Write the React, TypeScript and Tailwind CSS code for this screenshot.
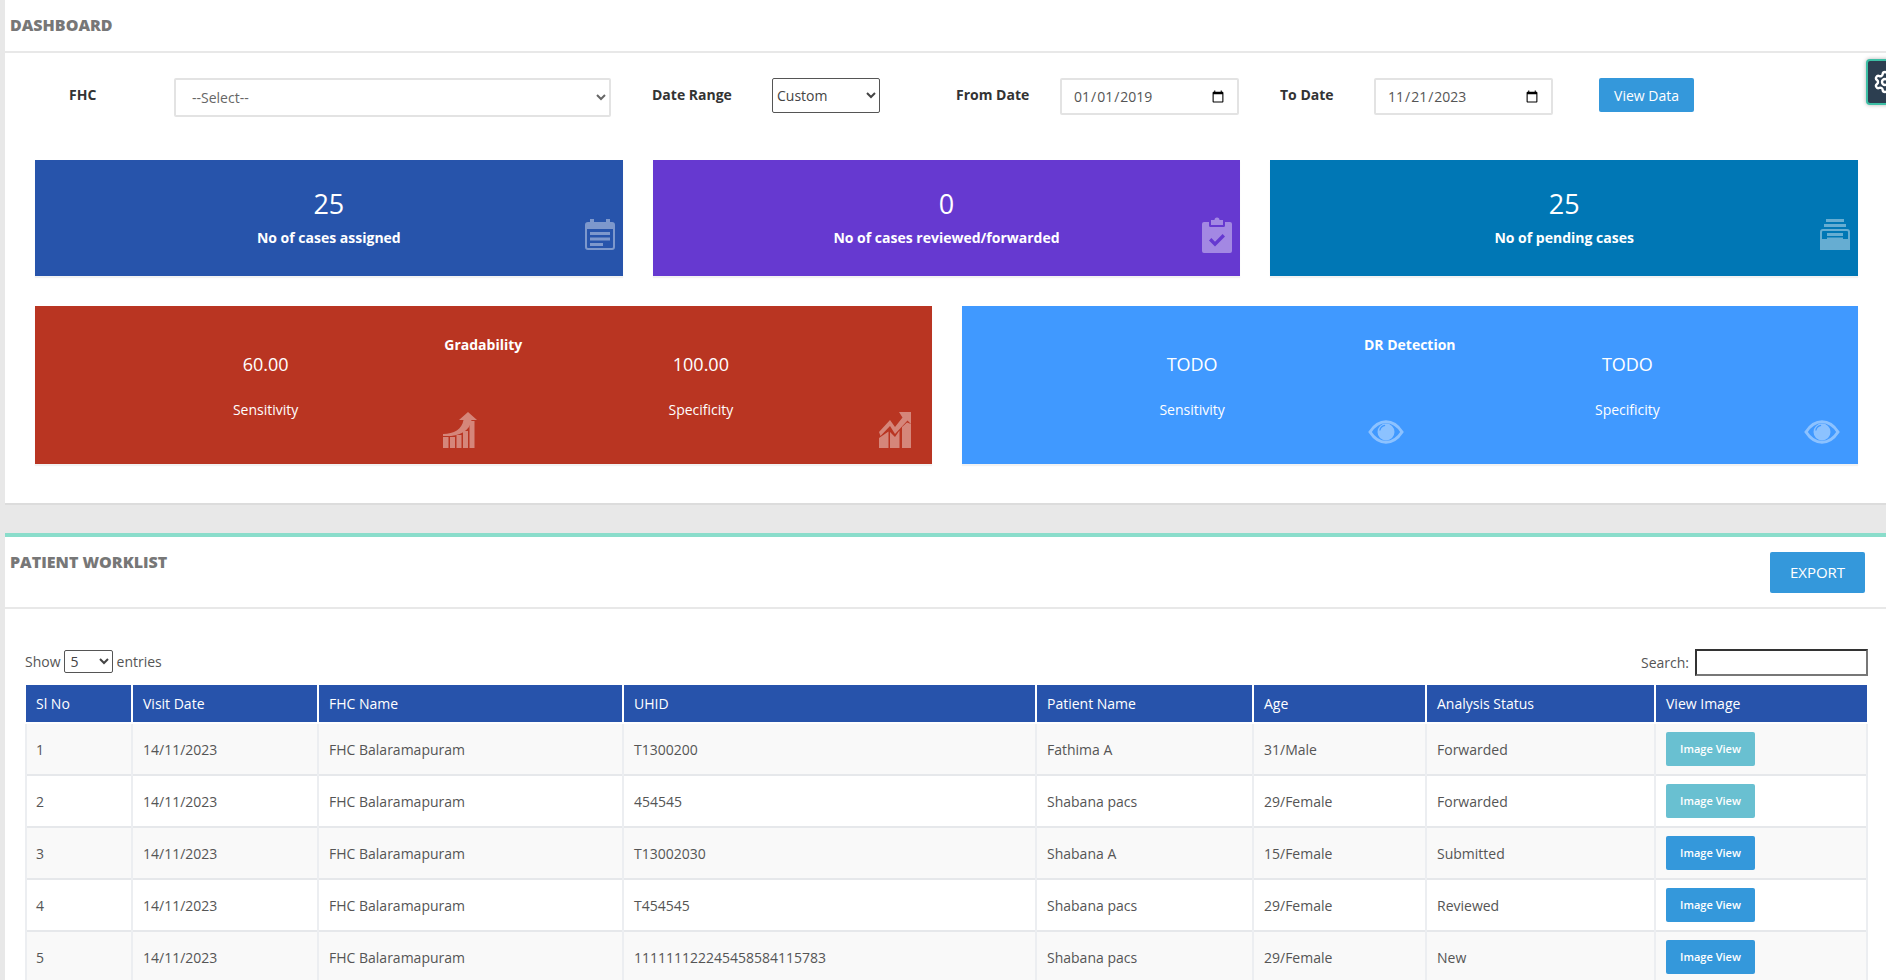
import { Settings } from "lucide-react";

const rows = [
  { no: 1, uhid: "T1300200", name: "Fathima A", age: "31/Male", status: "Forwarded", muted: true },
  { no: 2, uhid: "454545", name: "Shabana pacs", age: "29/Female", status: "Forwarded", muted: true },
  { no: 3, uhid: "T13002030", name: "Shabana A", age: "15/Female", status: "Submitted", muted: false },
  { no: 4, uhid: "T454545", name: "Shabana pacs", age: "29/Female", status: "Reviewed", muted: false },
  { no: 5, uhid: "111111122245458584115783", name: "Shabana pacs", age: "29/Female", status: "New", muted: false },
];

const columns = [
  { label: "Sl No", width: 106 },
  { label: "Visit Date", width: 186 },
  { label: "FHC Name", width: 305 },
  { label: "UHID", width: 413 },
  { label: "Patient Name", width: 217 },
  { label: "Age", width: 173 },
  { label: "Analysis Status", width: 229 },
  { label: "View Image", width: 212 },
];

function CalendarIcon() {
  return (
    <svg viewBox="0 0 30 31" className="absolute right-[8px] bottom-[26px] w-[30px] h-[31px]" fill="none">
      <g opacity="0.4">
        <path fillRule="evenodd" clipRule="evenodd" fill="#fff" d="M5 0.5a2 2 0 0 1 4 0V3h12V0.5a2 2 0 0 1 4 0V3h2a3 3 0 0 1 3 3v22a3 3 0 0 1-3 3H3a3 3 0 0 1-3-3V6a3 3 0 0 1 3-3h2zM2 10v18a1 1 0 0 0 1 1h24a1 1 0 0 0 1-1V10z" />
        <rect x="5" y="13" width="20" height="3" fill="#fff" />
        <rect x="5" y="18.500" width="20" height="3" fill="#fff" />
        <rect x="5" y="24" width="13" height="3" fill="#fff" />
      </g>
    </svg>
  );
}

function ClipboardIcon() {
  return (
    <svg viewBox="0 0 30 36" className="absolute right-[8px] bottom-[23px] w-[30px] h-[36px]" fill="none">
      <path opacity="0.4" fill="#fff" fillRule="evenodd" clipRule="evenodd" d="M2 5h5V8.500a1.500 1.500 0 0 0 1.500 1.500h13A1.500 1.500 0 0 0 23 8.500V5h5a2 2 0 0 1 2 2v27a2 2 0 0 1-2 2H2a2 2 0 0 1-2-2V7a2 2 0 0 1 2-2zM9 3h3.500a2.500 2.500 0 0 1 5 0H21v5H9zM7 23.500l2.400-2.400 3.600 3.600 7.600-7.600 2.400 2.400-10 10z" />
    </svg>
  );
}

function TrayIcon() {
  return (
    <svg viewBox="0 0 30 31" className="absolute right-[8px] bottom-[26px] w-[30px] h-[31px]" fill="none">
      <g opacity="0.4" fill="#fff">
        <rect x="6" y="0" width="18" height="3" />
        <rect x="4" y="5" width="22" height="3" />
        <path fillRule="evenodd" clipRule="evenodd" d="M3 10h24a3 3 0 0 1 3 3v18H0V13a3 3 0 0 1 3-3zM2 20h26v-7a1 1 0 0 0-1-1H3a1 1 0 0 0-1 1z" />
        <rect x="7" y="14" width="16" height="3" />
        <rect x="7" y="18.500" width="16" height="1.500" />
      </g>
    </svg>
  );
}

function GrowthIcon() {
  return (
    <svg viewBox="0 0 34 36" className="absolute w-[34px] h-[36px] left-[408px] bottom-[16px]" fill="none">
      <g opacity="0.4" fill="#fff">
        <rect x="0" y="25" width="5.500" height="11" />
        <rect x="7" y="25" width="5" height="11" />
        <rect x="13.500" y="23" width="5" height="13" />
        <rect x="20" y="19" width="5" height="17" />
        <rect x="26.500" y="9" width="5" height="27" />
        <path d="M0 22C11 22 19 17 20.500 8H16L25 0l9 8h-5.500C27 20 14 25 0 24z" />
      </g>
    </svg>
  );
}

function TrendIcon() {
  return (
    <svg viewBox="0 0 32 36" className="absolute w-[32px] h-[36px] right-[21px] bottom-[16px]" fill="none">
      <g opacity="0.4" fill="#fff">
        <path d="M0 26l9.500-6.500V36H0z" />
        <path d="M11 20l5 5 4.500-6.500V36H11z" />
        <path d="M23 15l5-4.500 4 1.500V36h-9z" />
        <path d="M0 20L11 8l5 7 7.500-9.500L20 0h12v12l-3.500-3.500L16 22 11 14 1.500 24z" />
      </g>
    </svg>
  );
}

function EyeIcon({ className }: { className: string }) {
  return (
    <svg viewBox="0 0 36 24" className={`absolute w-[36px] h-[24px] bottom-[20px] ${className}`} fill="none">
      <g opacity="0.4">
        <path stroke="#fff" strokeWidth="3" d="M2 12C6.500 5 12 1.800 18 1.800S29.500 5 34 12c-4.500 7-10 10.200-16 10.200S6.500 19 2 12z" />
        <path fill="#fff" fillRule="evenodd" clipRule="evenodd" d="M18 3.500a8.500 8.500 0 1 1 0 17 8.500 8.500 0 0 1 0-17zM12.500 10.500c.3-2.500 2.300-4.300 4.700-4.500l-.2-1.200c-3 .3-5.400 2.500-5.800 5.600z" />
      </g>
    </svg>
  );
}

function StatCard({ value, label, bg, icon }: { value: string; label: string; bg: string; icon: React.ReactNode }) {
  return (
    <div className={`relative h-[116px] flex flex-col items-center text-white shadow-[0_2px_1px_rgba(0,0,0,0.05)] ${bg}`}>
      <div className="mt-[26px] text-[27px] leading-[36px]">{value}</div>
      <div className="mt-[6px] text-[14px] leading-[20px] font-bold">{label}</div>
      {icon}
    </div>
  );
}

function MetricCard({ title, bg, left, right, icons }: { title: string; bg: string; left: string; right: string; icons: React.ReactNode }) {
  return (
    <div className={`relative h-[158px] px-[13px] text-white text-center shadow-[0_2px_1px_rgba(0,0,0,0.05)] ${bg}`}>
      <div className="pt-[29px] text-[14px] leading-[20px] font-bold">{title}</div>
      <div className="grid grid-cols-2">
        <div>
          <div className="text-[18px] leading-[24px] -mt-[3px]">{left}</div>
          <div className="mt-[24px] text-[14px] leading-[20px]">Sensitivity</div>
        </div>
        <div>
          <div className="text-[18px] leading-[24px] -mt-[3px]">{right}</div>
          <div className="mt-[24px] text-[14px] leading-[20px]">Specificity</div>
        </div>
      </div>
      {icons}
    </div>
  );
}

export default function App() {
  return (
    <div className="relative h-screen overflow-hidden bg-[#e8e8e8] pl-[5px] font-['Open_Sans',sans-serif] text-[14px] text-[#555]">
      <section className="h-[505px] bg-white border-b-2 border-[#dcdcdc]">
        <div className="h-[53px] border-b-2 border-[#e8e8e8] pl-[5px] pt-[15px]">
          <h1 className="text-[16px] leading-[20px] font-extrabold text-[#777]">DASHBOARD</h1>
        </div>

        <div className="flex items-start pl-[64px] pt-[25px]">
          <label className="w-[105px] h-[33px] flex items-center font-bold text-[14px] text-[#333]">FHC</label>
          <select className="w-[437px] h-[39px] pl-[12px] bg-white border-2 border-[#e3e3e3] rounded-[2px] text-[14px] text-[#666]">
            <option>--Select--</option>
          </select>
          <label className="ml-[41px] w-[120px] h-[33px] flex items-center font-bold text-[14px] text-[#333]">Date Range</label>
          <select className="w-[108px] h-[35px] bg-white border border-[#555] rounded-[2px] text-[14px] text-[#444]">
            <option>Custom</option>
          </select>
          <label className="ml-[76px] w-[104px] h-[33px] flex items-center font-bold text-[14px] text-[#333]">From Date</label>
          <input type="date" defaultValue="2019-01-01" className="w-[179px] h-[37px] pl-[11px] pr-[10px] bg-white border-2 border-[#e3e3e3] rounded-[2px] text-[14px] text-[#555]" />
          <label className="ml-[41px] w-[94px] h-[33px] flex items-center font-bold text-[14px] text-[#333]">To Date</label>
          <input type="date" defaultValue="2023-11-21" className="w-[179px] h-[37px] pl-[11px] pr-[10px] bg-white border-2 border-[#e3e3e3] rounded-[2px] text-[14px] text-[#555]" />
          <button className="ml-[46px] w-[95px] h-[34px] bg-[#3498db] rounded-[2px] text-[14px] text-white">View Data</button>
        </div>

        <div className="mt-[43px] pl-[30px] pr-[28px]">
          <div className="grid grid-cols-3 gap-[30px]">
            <StatCard value="25" label="No of cases assigned" bg="bg-[#2754ab]" icon={<CalendarIcon />} />
            <StatCard value="0" label="No of cases reviewed/forwarded" bg="bg-[#6639d0]" icon={<ClipboardIcon />} />
            <StatCard value="25" label="No of pending cases" bg="bg-[#0077b5]" icon={<TrayIcon />} />
          </div>
          <div className="mt-[30px] grid grid-cols-2 gap-[30px]">
            <MetricCard title="Gradability" bg="bg-[#b93522]" left="60.00" right="100.00" icons={<><GrowthIcon /><TrendIcon /></>} />
            <MetricCard
              title="DR Detection"
              bg="bg-[#4099ff]"
              left="TODO"
              right="TODO"
              icons={<><EyeIcon className="left-[406px]" /><EyeIcon className="right-[18px]" /></>}
            />
          </div>
        </div>
      </section>

      <section className="mt-[28px] h-[500px] bg-white border-t-4 border-[#8addcb]">
        <div className="h-[72px] border-b-2 border-[#e8e8e8] pl-[5px] pr-[21px] pt-[15px] flex items-start justify-between">
          <h2 className="text-[16px] leading-[20px] font-extrabold text-[#777]">PATIENT WORKLIST</h2>
          <button className="h-[41px] w-[95px] bg-[#3498db] rounded-[2px] text-[15px] text-white">EXPORT</button>
        </div>

        <div className="pl-[20px] pr-[18px] pt-[40px]">
          <div className="h-[36px] flex items-start justify-between">
            <div className="flex items-center h-[24px] text-[14px]">
              Show
              <select className="ml-[3px] mr-[4px] w-[49px] h-[23px] pl-[2px] bg-white border border-[#555] rounded-[2px] text-[14px] text-[#444]">
                <option>5</option>
              </select>
              entries
            </div>
            <div className="flex items-center">
              <span className="mr-[6px] text-[14px]">Search:</span>
              <input type="search" className="w-[173px] h-[27px] bg-white border-2 border-t-[#333] border-l-[#333] border-r-[#777] border-b-[#777]" />
            </div>
          </div>

          <table className="w-[1841px] table-fixed border-collapse text-[14px]">
            <colgroup>
              {columns.map((c) => (
                <col key={c.label} style={{ width: c.width }} />
              ))}
            </colgroup>
            <thead>
              <tr className="h-[38px] bg-[#2753ab] text-white">
                {columns.map((c) => (
                  <th key={c.label} className="px-[10px] text-left font-normal border-x-2 border-white first:border-l-0 last:border-r-0 border-b-2">
                    {c.label}
                  </th>
                ))}
              </tr>
            </thead>
            <tbody>
              {rows.map((r) => (
                <tr key={r.no} className="h-[52px] odd:bg-[#f9f9f9] bg-white border-b-2 border-[#e6e8eb]">
                  <td className="px-[9px] border-x-2 border-[#eceef1]">{r.no}</td>
                  <td className="px-[10px] border-x-2 border-[#eceef1]">14/11/2023</td>
                  <td className="px-[10px] border-x-2 border-[#eceef1]">FHC Balaramapuram</td>
                  <td className="px-[10px] border-x-2 border-[#eceef1]">{r.uhid}</td>
                  <td className="px-[10px] border-x-2 border-[#eceef1]">{r.name}</td>
                  <td className="px-[10px] border-x-2 border-[#eceef1]">{r.age}</td>
                  <td className="px-[10px] border-x-2 border-[#eceef1]">{r.status}</td>
                  <td className="px-[10px] border-x-2 border-[#eceef1]">
                    <button className={`block w-[89px] h-[34px] rounded-[2px] text-[11px] font-semibold text-white ${r.muted ? "bg-[#69c0d1]" : "bg-[#3498db]"}`}>
                      Image View
                    </button>
                  </td>
                </tr>
              ))}
            </tbody>
          </table>
        </div>
      </section>

      <div className="absolute top-[59px] left-[1866px] w-[40px] h-[46px] bg-[#2c3e50] border-2 border-[#3dbfa5] rounded-l-[4px] shadow-[0_0_4px_rgba(0,0,0,0.3)] flex items-center pl-[5px]">
        <Settings size={24} strokeWidth={2.4} className="text-white" />
      </div>
    </div>
  );
}
